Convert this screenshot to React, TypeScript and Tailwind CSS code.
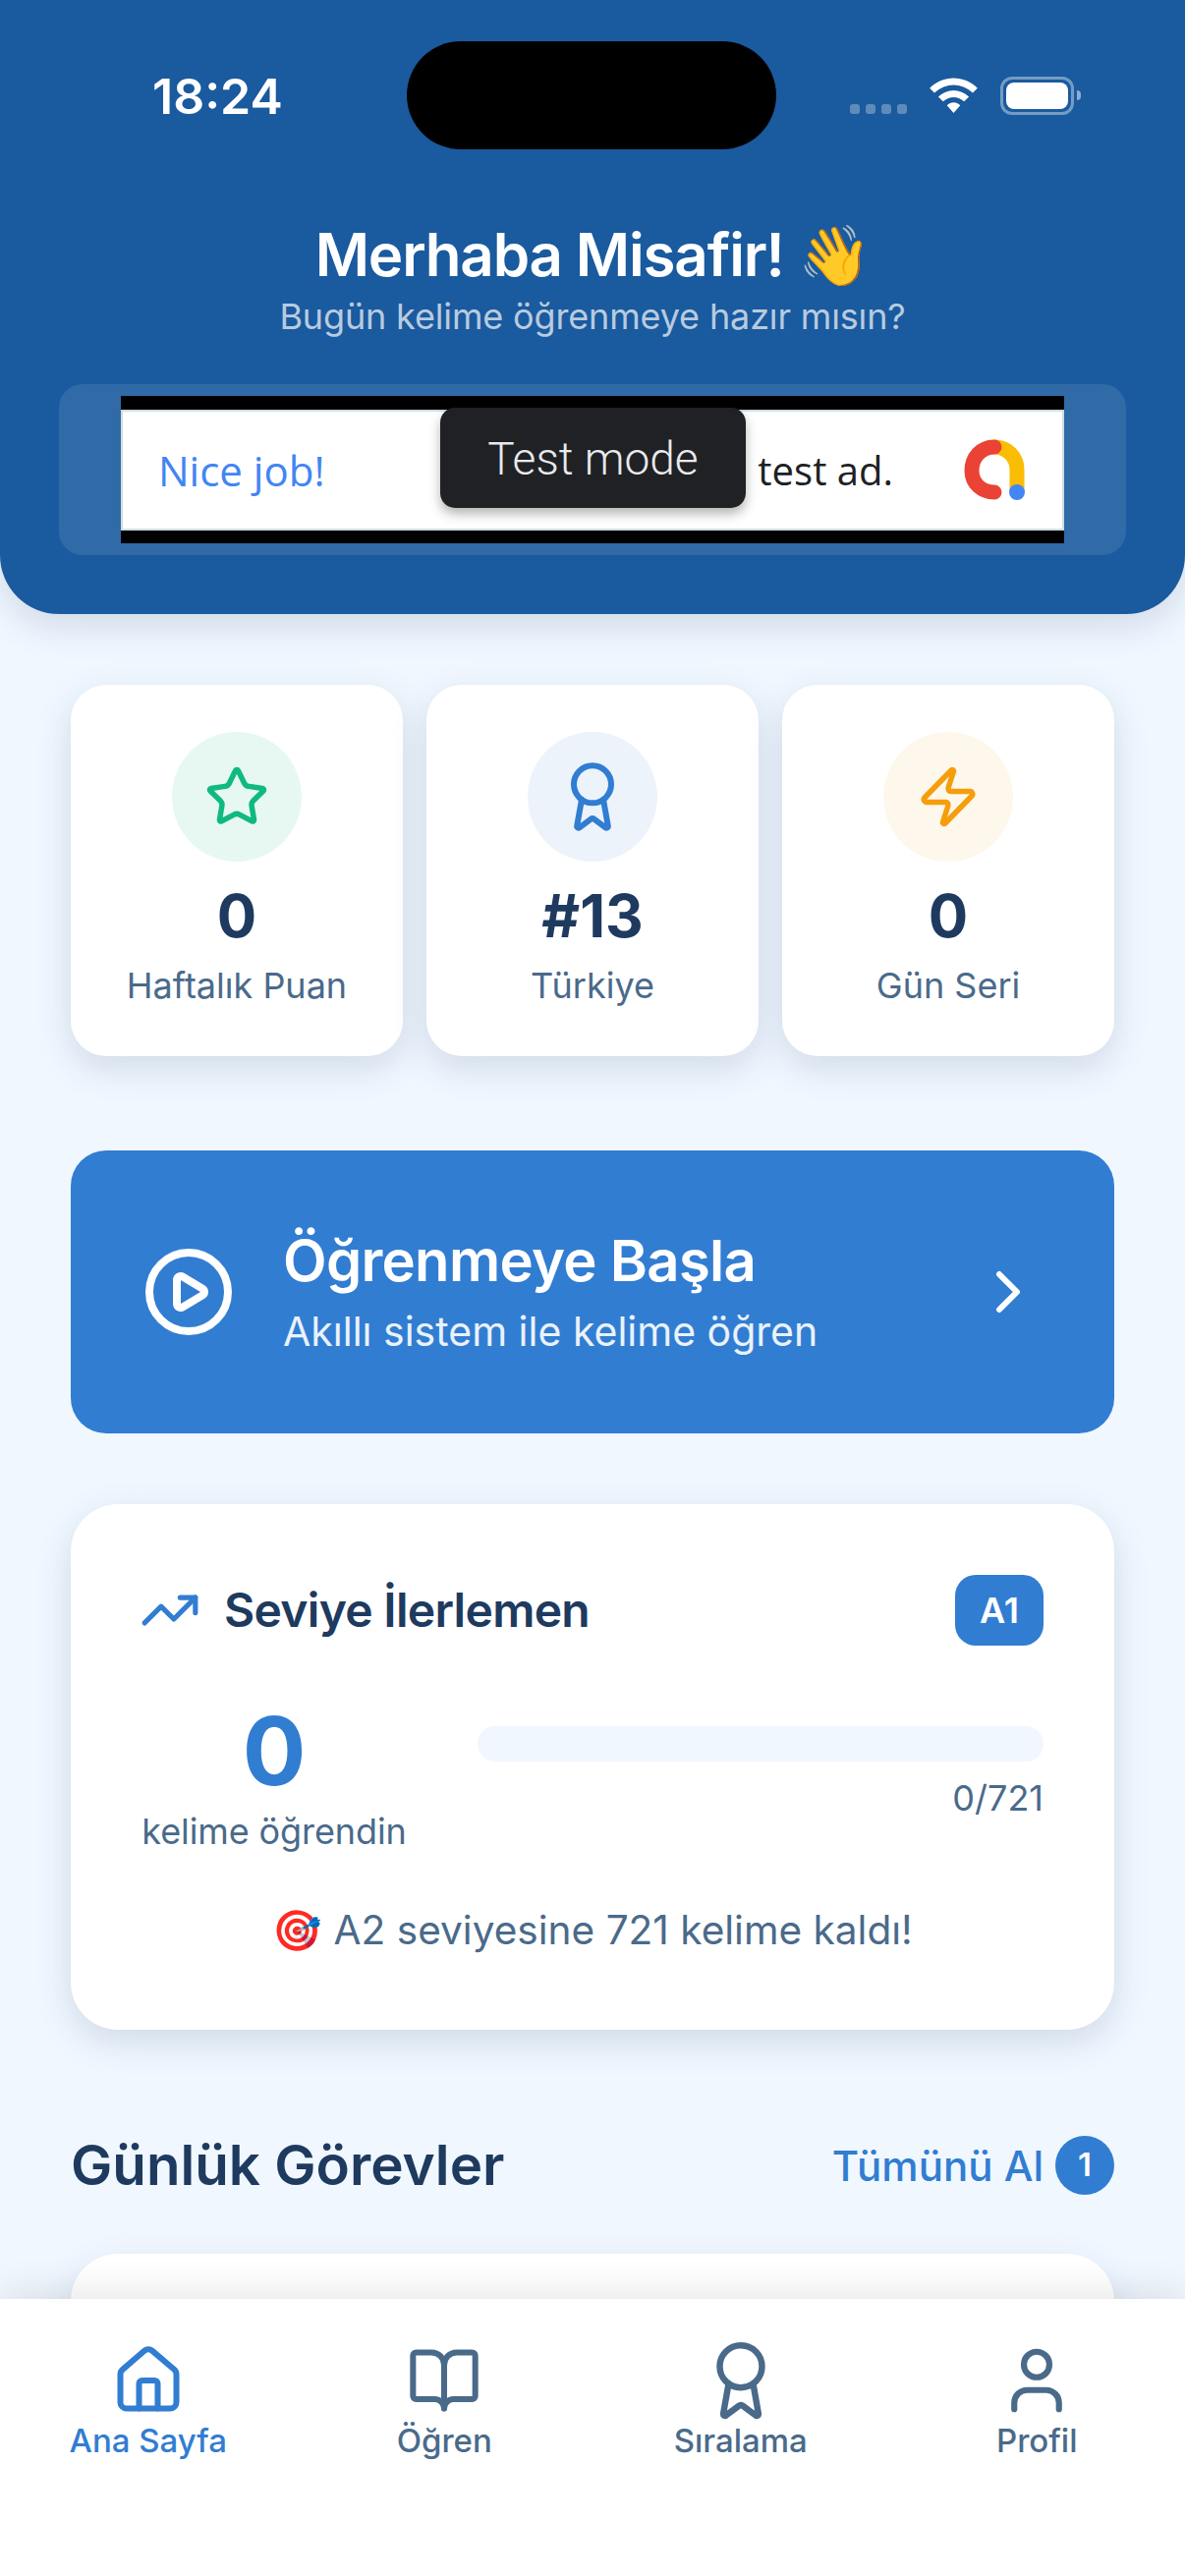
import { House, BookOpen, Award, User, Star, Zap, CirclePlay, ChevronRight, TrendingUp } from "lucide-react";

function StatCard({ tint, icon, value, label }: { tint: string; icon: React.ReactNode; value: string; label: string }) {
  return (
    <div className="flex h-[378px] flex-1 flex-col items-center rounded-[36px] bg-white pt-[48px] shadow-[0_12px_36px_rgba(30,58,95,0.15)]">
      <div className={`flex h-[132px] w-[132px] items-center justify-center rounded-full ${tint}`}>{icon}</div>
      <div className="mt-[19px] text-[60px] leading-[72px] font-bold text-[#1e3a5f]">{value}</div>
      <div className="mt-[11px] text-[36px] leading-[48px] text-[#4a6a8a]">{label}</div>
    </div>
  );
}

function NavItem({ icon, label, active }: { icon: React.ReactNode; label: string; active?: boolean }) {
  return (
    <div className={`flex flex-1 flex-col items-center ${active ? "text-[#317dd2]" : "text-[#4a6a8a]"}`}>
      <div className="flex h-[78px] items-center justify-center">{icon}</div>
      <div className="mt-px text-[33px] leading-[42px] font-medium">{label}</div>
    </div>
  );
}

function AdLogo() {
  return (
    <svg width="64" height="64" viewBox="0 0 64 64" fill="none">
      <path d="M31 8 C44 8 54 18 54 31 V53" stroke="#fbbc04" strokeWidth="15" strokeLinecap="round" />
      <path d="M31 8 C17 8 8 19 8 32 C8 45 18 54 31 54" stroke="#ea4335" strokeWidth="15" strokeLinecap="round" />
      <circle cx="54" cy="54" r="8" fill="#4285f4" />
    </svg>
  );
}

export default function App() {
  return (
    <div className="relative h-[2622px] w-[1206px] overflow-hidden bg-[#f0f7ff] font-['Inter',sans-serif]">
      <header className="relative h-[625px] rounded-b-[60px] bg-[#1a5a9e] px-[60px] shadow-[0_12px_36px_rgba(30,58,95,0.15)]">
        <div className="absolute left-[414px] top-[42px] h-[110px] w-[376px] rounded-[55px] bg-black" />
        <div className="absolute left-[155px] top-[68px] text-[50px] leading-[60px] font-semibold text-white">18:24</div>
        <div className="absolute left-[865px] top-[70px] flex h-[47px] w-[240px] items-end">
          <div className="mb-px flex gap-[6px]">
            <span className="h-[10px] w-[10px] rounded-[3px] bg-white/30" />
            <span className="h-[10px] w-[10px] rounded-[3px] bg-white/30" />
            <span className="h-[10px] w-[10px] rounded-[3px] bg-white/30" />
            <span className="h-[10px] w-[10px] rounded-[3px] bg-white/30" />
          </div>
          <svg className="ml-[22px] mb-px" width="51" height="37" viewBox="0 0 50 38" fill="white">
            <path d="M0 11 C14 -3 36 -3 50 11 L45 16 C33 5 17 5 5 16 Z" />
            <path d="M9 20 C18 11 32 11 41 20 L36 25 C29 19 21 19 14 25 Z" />
            <path d="M18 29 C22 25 28 25 32 29 L25 37 Z" />
          </svg>
          <div className="ml-[22px] flex h-[39px] w-[75px] items-center justify-center rounded-[12px] border-[3px] border-white/40">
            <div className="h-[27px] w-[63px] rounded-[8px] bg-white" />
          </div>
          <div className="mb-[15px] ml-[3px] h-[10px] w-[4px] rounded-r-full bg-white/50" />
        </div>

        <div className="pt-[223px] text-center">
          <div className="text-[60px] leading-[72px] font-semibold tracking-[-1.15px] text-white">Merhaba Misafir! 👋</div>
          <div className="mt-[5px] text-[36px] leading-[44px] tracking-[-0.15px] text-white/70">Bugün kelime öğrenmeye hazır mısın?</div>
        </div>

        <div className="mt-[47px] flex h-[174px] items-center justify-center rounded-[24px] bg-[#306ba8]">
          <div className="relative h-[150px] w-[960px] bg-black py-[14px]">
            <div className="flex h-[123px] items-center justify-between border-[2px] border-[#cfdde3] bg-white pl-[36px] pr-[36px]">
              <span className="font-['Open_Sans',sans-serif] text-[42px] font-medium text-[#4285f4]">Nice job!</span>
              <div className="flex items-center gap-[72px]">
                <span className="font-['Open_Sans',sans-serif] text-[40px] text-[#202124]">test ad.</span>
                <AdLogo />
              </div>
            </div>
            <div className="absolute left-[325px] top-[12px] flex h-[102px] w-[311px] items-center justify-center rounded-[15px] bg-[#202124] pt-[3px] font-['Roboto',sans-serif] text-[46px] font-light text-[#e8eaed] shadow-[0_6px_12px_rgba(0,0,0,0.3)]">
              Test mode
            </div>
          </div>
        </div>
      </header>

      <main className="px-[72px]">
        <div className="mt-[72px] flex gap-[24px]">
          <StatCard tint="bg-[#e7f8f2]" icon={<Star size={66} strokeWidth={2} className="text-[#10b981]" />} value="0" label="Haftalık Puan" />
          <StatCard tint="bg-[#ecf3fb]" icon={<Award size={76} strokeWidth={1.9} className="text-[#317dd2]" />} value="#13" label="Türkiye" />
          <StatCard tint="bg-[#fef7ec]" icon={<Zap size={66} strokeWidth={2} className="text-[#f59e0b]" />} value="0" label="Gün Seri" />
        </div>

        <div className="mt-[96px] flex h-[288px] items-center rounded-[36px] bg-[#317dd2] pl-[72px] pr-[72px]">
          <CirclePlay size={96} strokeWidth={2} className="text-white" />
          <div className="ml-[48px] flex-1">
            <div className="mt-[-4px] text-[58px] leading-[72px] font-semibold tracking-[-0.7px] text-white">Öğrenmeye Başla</div>
            <div className="mt-[12px] text-[41px] leading-[48px] text-white/90">Akıllı sistem ile kelime öğren</div>
          </div>
          <ChevronRight size={72} strokeWidth={2} className="text-white" />
        </div>

        <section className="mt-[72px] h-[535px] rounded-[48px] bg-white px-[72px] pt-[72px] shadow-[0_12px_36px_rgba(30,58,95,0.15)]">
          <div className="flex h-[72px] items-center justify-between">
            <div className="flex items-center gap-[24px]">
              <TrendingUp size={62} strokeWidth={2} className="-ml-[2px] text-[#317dd2]" />
              <span className="text-[48px] font-semibold tracking-[-0.7px] text-[#1e3a5f]">Seviye İlerlemen</span>
            </div>
            <div className="flex h-[72px] w-[90px] items-center justify-center rounded-[21px] bg-[#317dd2] text-[36px] font-semibold text-white">A1</div>
          </div>
          <div className="mt-[48px] flex gap-[72px]">
            <div className="flex w-[270px] flex-col items-center">
              <div className="text-[96px] leading-[119px] font-bold text-[#317dd2]">0</div>
              <div className="whitespace-nowrap text-[36px] leading-[44px] tracking-[-0.1px] text-[#4a6a8a]">kelime öğrendin</div>
            </div>
            <div className="flex-1 pt-[34px]">
              <div className="h-[36px] rounded-full bg-[#f0f7ff]" />
              <div className="mt-[15px] text-right text-[36px] leading-[44px] text-[#4a6a8a]">0/721</div>
            </div>
          </div>
          <div className="mt-[55px] text-center text-[40.6px] leading-[48px] text-[#4a6a8a]">🎯 A2 seviyesine 721 kelime kaldı!</div>
        </section>

        <div className="mt-[102px] flex h-[72px] items-center justify-between">
          <h2 className="text-[56.5px] font-semibold text-[#1e3a5f]">Günlük Görevler</h2>
          <div className="flex items-center gap-[12px]">
            <span className="text-[42px] font-medium text-[#317dd2]">Tümünü Al</span>
            <span className="flex h-[60px] w-[60px] items-center justify-center rounded-full bg-[#317dd2] text-[33px] font-semibold text-white">1</span>
          </div>
        </div>

        <div className="mt-[54px] h-[300px] rounded-[48px] bg-white shadow-[0_12px_36px_rgba(30,58,95,0.12)]" />
      </main>

      <nav className="absolute inset-x-0 bottom-0 flex h-[282px] items-start bg-white pt-[44px] shadow-[0_-6px_36px_rgba(0,0,0,0.1)]">
        <NavItem active icon={<House size={76} strokeWidth={1.9} />} label="Ana Sayfa" />
        <NavItem icon={<BookOpen size={76} strokeWidth={1.9} />} label="Öğren" />
        <NavItem icon={<Award size={86} strokeWidth={1.8} />} label="Sıralama" />
        <NavItem icon={<User size={78} strokeWidth={1.9} />} label="Profil" />
      </nav>
    </div>
  );
}
